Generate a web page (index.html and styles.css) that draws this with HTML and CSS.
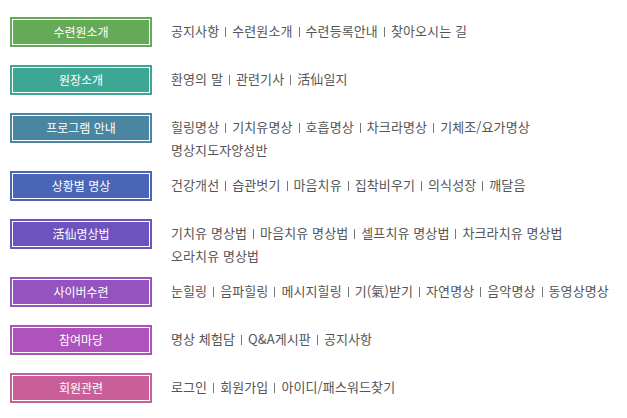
FILE: index.html
```html
<!DOCTYPE html>
<html lang="ko">
<head>
    <meta charset="UTF-8">
    <meta name="viewport" content="width=device-width, initial-scale=1.0">
    <title>사이트맵</title>
    <link rel="stylesheet" href="styles.css">
</head>
<body>
    <div class="sitemap">
        <div class="row">
            <div class="cat cat-1">수련원소개</div>
            <div class="links">
                <div class="line">공지사항<span class="sep"></span>수련원소개<span class="sep"></span>수련등록안내<span class="sep"></span>찾아오시는 길</div>
            </div>
        </div>
        <div class="row">
            <div class="cat cat-2">원장소개</div>
            <div class="links">
                <div class="line">환영의 말<span class="sep"></span>관련기사<span class="sep"></span>活仙일지</div>
            </div>
        </div>
        <div class="row">
            <div class="cat cat-3">프로그램 안내</div>
            <div class="links">
                <div class="line">힐링명상<span class="sep"></span>기치유명상<span class="sep"></span>호흡명상<span class="sep"></span>차크라명상<span class="sep"></span>기체조/요가명상</div>
                <div class="line">명상지도자양성반</div>
            </div>
        </div>
        <div class="row">
            <div class="cat cat-4">상황별 명상</div>
            <div class="links">
                <div class="line">건강개선<span class="sep"></span>습관벗기<span class="sep"></span>마음치유<span class="sep"></span>집착비우기<span class="sep"></span>의식성장<span class="sep"></span>깨달음</div>
            </div>
        </div>
        <div class="row">
            <div class="cat cat-5">活仙명상법</div>
            <div class="links">
                <div class="line">기치유 명상법<span class="sep"></span>마음치유 명상법<span class="sep"></span>셀프치유 명상법<span class="sep"></span>차크라치유 명상법</div>
                <div class="line">오라치유 명상법</div>
            </div>
        </div>
        <div class="row">
            <div class="cat cat-6">사이버수련</div>
            <div class="links">
                <div class="line">눈힐링<span class="sep"></span>음파힐링<span class="sep"></span>메시지힐링<span class="sep"></span>기(氣)받기<span class="sep"></span>자연명상<span class="sep"></span>음악명상<span class="sep"></span>동영상명상</div>
            </div>
        </div>
        <div class="row">
            <div class="cat cat-7">참여마당</div>
            <div class="links">
                <div class="line">명상 체험담<span class="sep"></span>Q&amp;A게시판<span class="sep"></span>공지사항</div>
            </div>
        </div>
        <div class="row">
            <div class="cat cat-8">회원관련</div>
            <div class="links">
                <div class="line">로그인<span class="sep"></span>회원가입<span class="sep"></span>아이디/패스워드찾기</div>
            </div>
        </div>
    </div>
</body>
</html>
```

FILE: styles.css
```css
body {
    margin: 0;
    padding: 0;
    background-color: #fff;
    font-family: "Noto Sans CJK KR", "Noto Sans", sans-serif;
    font-size: 12px;
    color: #555;
}
.sitemap {
    padding: 17px 0 0 10px;
}
.row {
    display: flex;
    align-items: flex-start;
    margin-bottom: 10px;
}
.cat {
    flex: none;
    width: 142px;
    height: 30px;
    line-height: 30px;
    margin: 0 19px 8px 0;
    text-align: center;
    color: #fff;
    outline: 1px solid #fff;
    outline-offset: -3px;
}
.cat-1 { background-color: #64aa57; }
.cat-2 { background-color: #3ea794; }
.cat-3 { background-color: #4a86a1; }
.cat-4 { background-color: #4b65b6; }
.cat-5 { background-color: #6d53bd; }
.cat-6 { background-color: #9453be; }
.cat-7 { background-color: #af53bc; }
.cat-8 { background-color: #c95f98; }
.links {
    padding-top: 2px;
    font-size: 13px;
    letter-spacing: 0.1px;
}
.line {
    line-height: 23px;
    white-space: nowrap;
}
.sep {
    display: inline-block;
    width: 1px;
    height: 10px;
    margin: 0 6px;
    background-color: #777;
    vertical-align: -1px;
}
```
